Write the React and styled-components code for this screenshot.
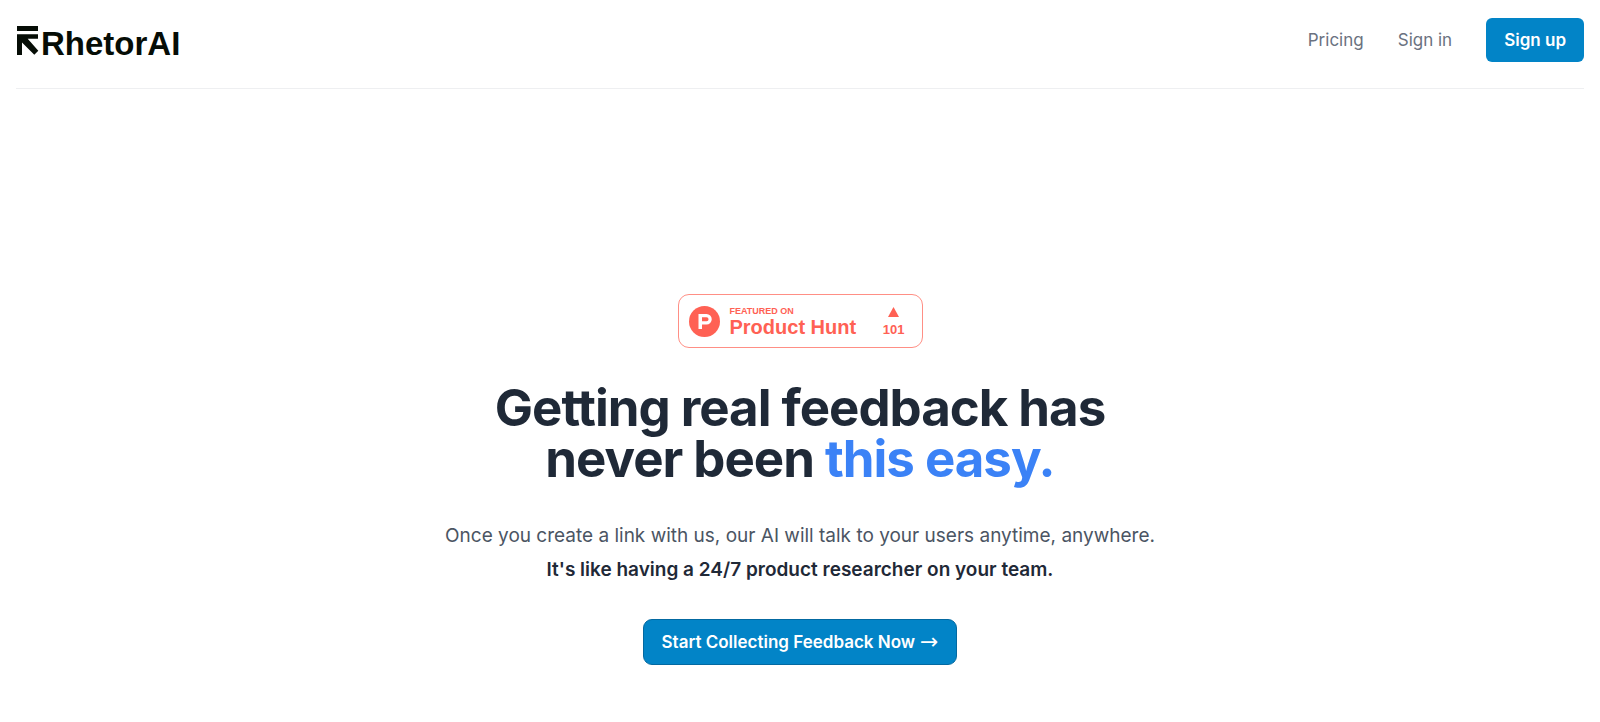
import React from "react";
import styled, { createGlobalStyle } from "styled-components";

const GlobalStyle = createGlobalStyle`
  * {
    box-sizing: border-box;
  }

  body {
    margin: 0;
    background-color: #ffffff;
    font-family: Inter, sans-serif;
    color: #1f2937;
  }

  a {
    color: inherit;
    text-decoration: none;
  }
`;

const Page = styled.div`
  padding: 0 16px;
`;

const Header = styled.header`
  display: flex;
  align-items: flex-start;
  justify-content: space-between;
  padding: 18px 0;
  border-bottom: 1px solid #eeeff1;
`;

const Logo = styled.a`
  display: flex;
  align-items: baseline;
  gap: 1px;
  font-family: "Liberation Sans", Arial, sans-serif;
  font-size: 33px;
  font-weight: bold;
  line-height: 52px;
  color: #060d06;
`;

const Nav = styled.nav`
  display: flex;
  align-items: center;
  gap: 34px;
  font-size: 17px;
  line-height: 24px;
  color: #6b7280;
`;

const Button = styled.button`
  padding: 10px 18px;
  border: 0;
  border-radius: 6px;
  background-color: #0284c7;
  font-family: inherit;
  font-size: 17px;
  font-weight: 600;
  line-height: 24px;
  color: #ffffff;
  cursor: pointer;
`;

const CtaButton = styled(Button)`
  display: flex;
  align-items: center;
  gap: 5px;
  padding: 10px 17px;
  border: 1px solid #0369a1;
  border-radius: 9px;
`;

const Arrow = styled.span`
  font-family: "DejaVu Sans", sans-serif;
  font-size: 22px;
  font-weight: 400;
  line-height: 24px;
`;

const Hero = styled.main`
  display: flex;
  flex-direction: column;
  align-items: center;
  padding: 205px 0 56px;
  text-align: center;
`;

const Badge = styled.a`
  display: flex;
  align-items: center;
  width: 245px;
  height: 54px;
  padding: 0 17px 0 10px;
  border: 1px solid #ff8f85;
  border-radius: 11px;
  font-family: "Liberation Sans", Arial, sans-serif;
  font-weight: bold;
  color: #ff6154;
`;

const BadgeText = styled.span`
  display: flex;
  flex-direction: column;
  flex: 1;
  padding: 2px 0 0 10px;
  text-align: left;
`;

const BadgeCaption = styled.span`
  font-size: 9px;
  line-height: 10px;
`;

const BadgeName = styled.span`
  font-size: 20px;
  line-height: 22px;
`;

const Votes = styled.span`
  display: flex;
  flex-direction: column;
  align-items: center;
  gap: 6px;
  padding-top: 2px;
  font-size: 13px;
  line-height: 14px;
`;

const Title = styled.h1`
  max-width: 680px;
  margin: 34px 0 0;
  font-size: 51px;
  font-weight: 700;
  line-height: 51px;
  letter-spacing: -0.02em;
`;

const Accent = styled.span`
  color: #3b82f6;
`;

const Subtitle = styled.p`
  margin: 35px 0 0;
  font-size: 19px;
  font-weight: 400;
  line-height: 34px;
  color: #4b5563;
`;

const Strong = styled.strong`
  display: block;
  font-weight: 600;
  color: #1f2937;
`;

const Actions = styled.div`
  margin-top: 32px;
`;

const LogoMark = () => (
	<svg width="24" height="30" viewBox="0 0 24 30" aria-hidden="true">
		<path d="M1 1H22V6H1ZM1 9.300H22V13.700H11.700L22.300 25.700L18.300 29.700L6 17.500V30H1Z" fill="currentColor" />
	</svg>
);

const ProductHuntMark = () => (
	<svg width="31" height="31" viewBox="0 0 31 31" aria-hidden="true">
		<circle cx="15.500" cy="15.500" r="15.500" fill="#ff6154" />
		<path
			d="M9.500 8H17.500A5 5 0 0 1 17.500 18.500H13V23H9.500ZM13 11.200V15.300H17.500A2 2 0 0 0 17.500 11.200Z"
			fill="#ffffff"
			fillRule="evenodd"
		/>
	</svg>
);

export default function App() {
	return (
		<>
			<GlobalStyle />
			<Page>
				<Header>
					<Logo href="#">
						<LogoMark />
						RhetorAI
					</Logo>
					<Nav>
						<a href="#pricing">Pricing</a>
						<a href="#sign-in">Sign in</a>
						<Button type="button">Sign up</Button>
					</Nav>
				</Header>

				<Hero>
					<Badge href="#product-hunt">
						<ProductHuntMark />
						<BadgeText>
							<BadgeCaption>FEATURED ON</BadgeCaption>
							<BadgeName>Product Hunt</BadgeName>
						</BadgeText>
						<Votes>
							<svg width="11" height="10" viewBox="0 0 11 10" aria-hidden="true">
								<path d="M5.500 0L11 10H0Z" fill="currentColor" />
							</svg>
							101
						</Votes>
					</Badge>

					<Title>
						Getting real feedback has never been <Accent>this easy.</Accent>
					</Title>

					<Subtitle>
						Once you create a link with us, our AI will talk to your users anytime, anywhere.
						<Strong>It's like having a 24/7 product researcher on your team.</Strong>
					</Subtitle>

					<Actions>
						<CtaButton type="button">
							Start Collecting Feedback Now
							<Arrow>→</Arrow>
						</CtaButton>
					</Actions>
				</Hero>
			</Page>
		</>
	);
}
